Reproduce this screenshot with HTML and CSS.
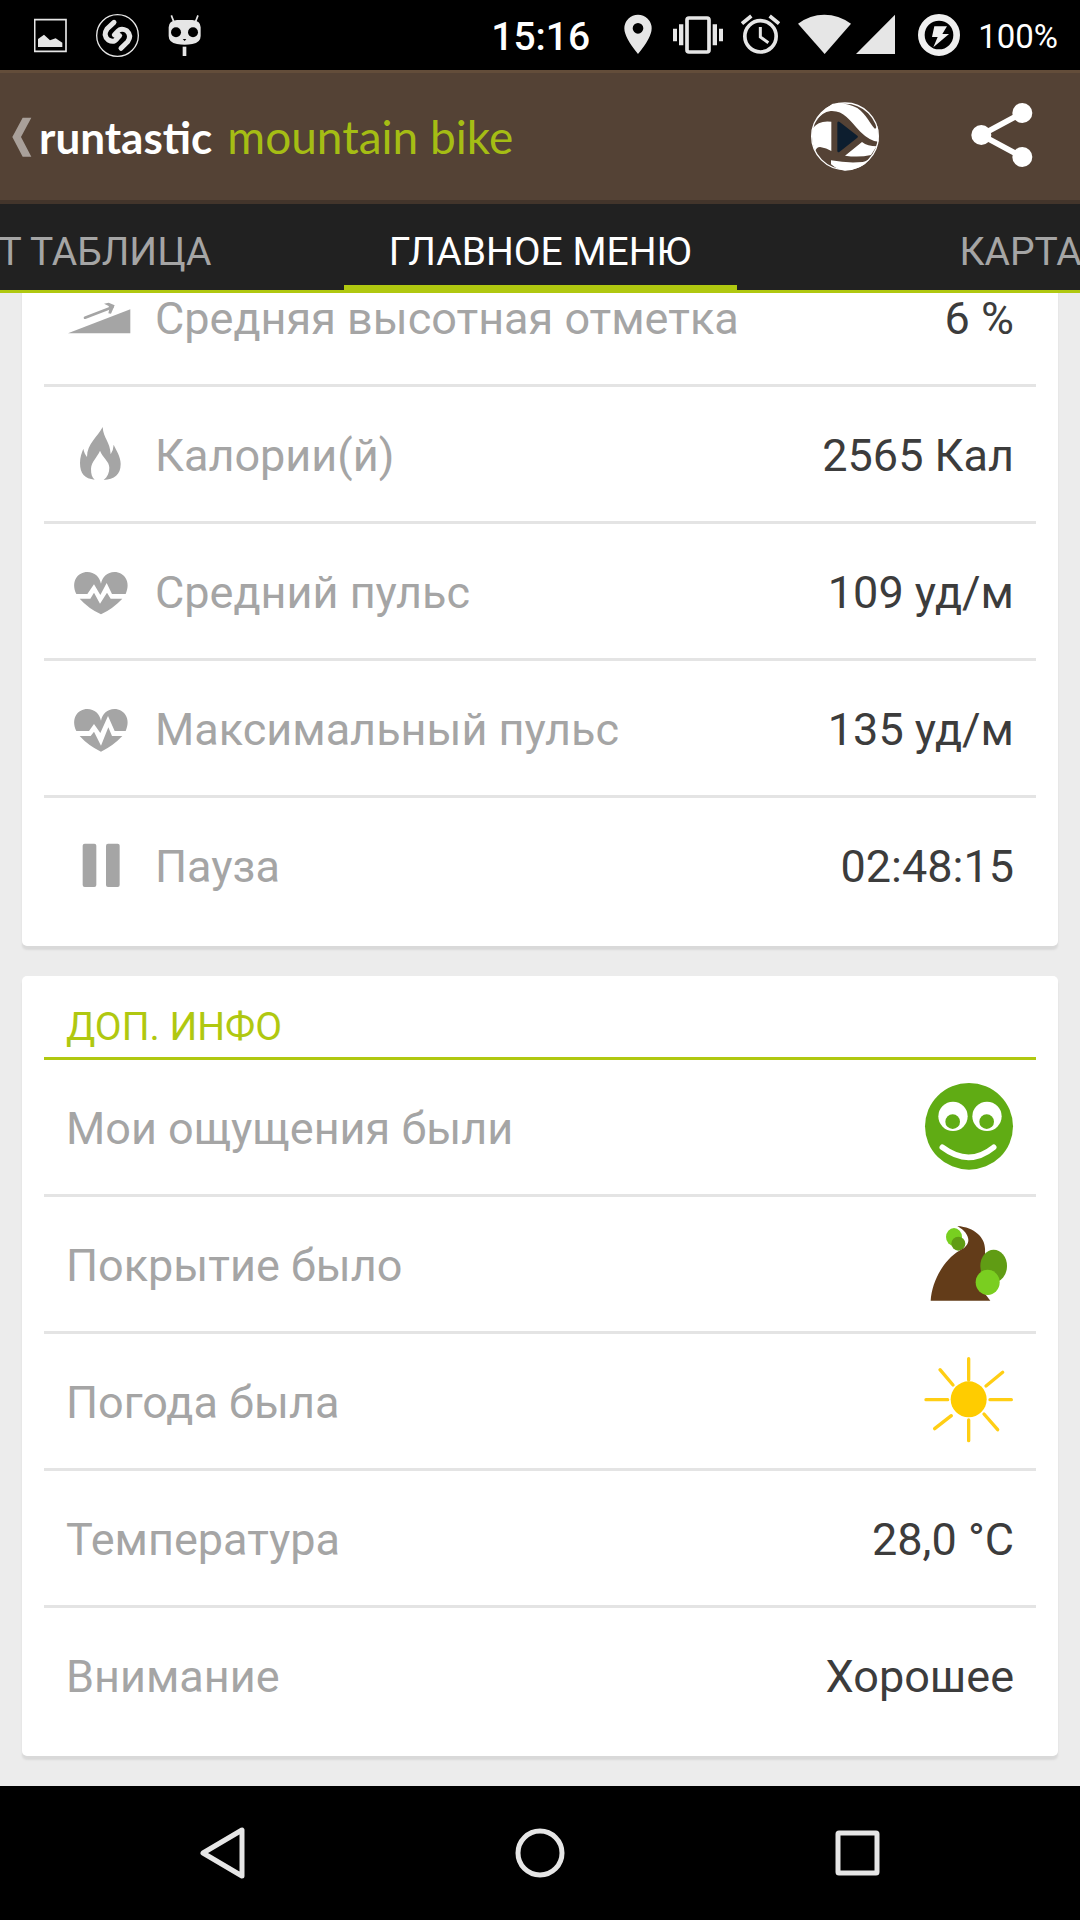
FILE: index.html
```html
<!DOCTYPE html>
<html lang="ru">
<head>
<meta charset="utf-8">
<meta name="viewport" content="width=device-width">
<title>Runtastic Mountain Bike</title>
<link rel="stylesheet" href="styles.css">
</head>
<body>
<div class="status">
  <div class="status-left">
    <svg width="33" height="70" viewBox="102 0 99 210"><path d="M104 59h94v95h-94z" fill="none" stroke="#e6e6e6" stroke-width="5"/><path d="M114 141v-24l18-13 18 17 17-6 20 13v13z" fill="#e6e6e6"/></svg>
    <svg width="43" height="70" viewBox="288 0 129 210"><circle cx="352.500" cy="106.500" r="62.500" fill="none" stroke="#e6e6e6" stroke-width="4"/><path d="M342 67l-21 20q-13 19 4 33 16 9 26-4l8-9M363 145l20-20q13-18-3-33-17-10-28 3l-9 10" fill="none" stroke="#e6e6e6" stroke-width="15" stroke-linecap="round"/></svg>
    <svg width="33" height="70" viewBox="505 0 99 210"><path d="M515 46l7 18M595 46l-7 18" stroke="#e6e6e6" stroke-width="5"/><path d="M532 60h46q25 2 25 22v26q0 20-25 24-23 4-46 0-25-4-25-24V82q0-20 25-22z" fill="#e6e6e6"/><circle cx="529" cy="97" r="15"/><circle cx="580" cy="97" r="15"/><path d="M549 117h11l-5 6z"/><path d="M549 140h11v28h-11z" fill="#e6e6e6"/></svg>
  </div>
  <div class="status-right">
    <time class="clock">15:16</time>
    <svg width="28" height="70" viewBox="70 0 84 210"><path fill-rule="evenodd" d="M112 44a41 41 0 0 1 41 41q0 28-41 77-41-49-41-77a41 41 0 0 1 41-41zm0 25a16 16 0 1 0 0 32 16 16 0 0 0 0-32z" fill="#e6e6e6"/></svg>
    <svg class="gap-vibrate" width="50" height="70" viewBox="219 0 150 210"><rect x="261" y="54" width="66" height="102" rx="6" fill="none" stroke="#e6e6e6" stroke-width="11"/><path d="M219 86h12v38h-12zM237 73h13v63h-13zM338 73h13v63h-13zM357 86h12v38h-12z" fill="#e6e6e6"/></svg>
    <svg class="gap-icon" width="39" height="70" viewBox="423 0 117 210"><g fill="none" stroke="#e6e6e6"><circle cx="481.500" cy="109" r="47" stroke-width="11"/><path d="M481 81v30l24 17" stroke-width="9"/><path d="M426 71l28-23M537 71l-28-23" stroke-width="11"/></g></svg>
    <svg class="gap-icon" width="53" height="70" viewBox="594 0 159 210"><path d="M594 71q36-27 79-27t80 27l-79 91z" fill="#e6e6e6"/></svg>
    <svg class="gap-signal" width="39" height="70" viewBox="768 0 117 210"><path d="M885 44v118H768z" fill="#e6e6e6"/></svg>
    <svg class="gap-battery" width="42" height="70" viewBox="954 0 126 210"><circle cx="1017" cy="105" r="53" fill="none" stroke="#efefef" stroke-width="20"/><path d="M1003 79h38l-14 23h20l-47 40 13-31h-17z" fill="#efefef"/></svg>
    <span class="battery">100%</span>
  </div>
</div>

<header class="appbar">
  <a class="home" href="#" aria-label="Назад">
    <svg width="20" height="60" viewBox="36 22 60 180"><path d="M68 54h26l-31 58 31 59H68L37 112z" fill="#a9a09a"/></svg>
    <span class="logo"><span class="brand">runtastic</span><span class="product">mountain bike</span></span>
  </a>
  <div class="actions">
    <button class="action" type="button" aria-label="Видео">
      <svg width="68" height="69" viewBox="633 309 204 207"><circle cx="735" cy="412" r="100" fill="none" stroke="#fff" stroke-width="4"/><g fill="#fff"><path d="M647 368q15-32 51-54 40-5 74 13c27 20 38 46 51 61q4 4 9-8l4 48q-27-2-55-30c-34-37-50-64-89-62q-27 3-45 32z"/><path d="M638 388q18-25 56-20v88q-14-9-34-12-10 0-15 13-14-36-7-69z"/><path d="M735 470l51-41q17 13 44 13l-17 26q-36 8-78 2z"/><path d="M693 484q48 9 95 5 18-4 24-11-28 36-77 37-22-2-42-19z"/></g><path d="M712 371q1-6 7-2l53 41q4 3 0 6l-53 42q-6 4-7-2z" fill="#0d1e2f"/></svg>
    </button>
    <button class="action" type="button" aria-label="Поделиться">
      <svg width="62" height="69" viewBox="1112 309 186 207"><path d="M1266 342l-123 66 123 66" fill="none" stroke="#fff" stroke-width="17"/><g fill="#fff"><circle cx="1266" cy="342" r="30"/><circle cx="1143" cy="408" r="30"/><circle cx="1266" cy="474" r="30"/></g></svg>
    </button>
  </div>
</header>

<nav class="tabs">
  <a class="tab tab-prev" href="#">Т ТАБЛИЦА</a>
  <a class="tab tab-active" href="#" aria-current="page">ГЛАВНОЕ МЕНЮ</a>
  <a class="tab tab-next" href="#">КАРТА</a>
</nav>

<main class="content">
  <section class="card card-scrolled">
    <dl class="rows">
      <div class="row">
        <svg width="70" height="70" viewBox="48 -24 210 210"><path d="M54 130l187-72v72z" fill="#a5a5a5"/><path d="M105 83l82-31" stroke="#a5a5a5" stroke-width="8" stroke-linecap="round"/><path d="M162 41l14-3 18 8-11 25-8-1 3-12-2-10z" fill="#a5a5a5"/></svg>
        <dt>Средняя высотная отметка</dt><dd>6 %</dd>
      </div>
      <div class="row">
        <svg width="70" height="70" viewBox="48 387 210 210"><path d="M158 411c2 35 22 42 24 82q8-11 9-29c8 18 21 35 21 58 0 32-19 46-51 48 12-10 17-23 17-37 0-20-20-29-28-51-7 18-26 33-27 54 0 16 3 26 11 33-30-3-44-18-44-50 0-17 5-31 10-43 2 12 6 17 11 25 0-40 32-60 47-90z" fill="#a5a5a5"/></svg>
        <dt>Калории(й)</dt><dd>2565 Кал</dd>
      </div>
      <div class="row">
        <svg width="70" height="70" viewBox="48 798 210 210"><g fill="#a5a5a5"><path d="M79 912c-18-38 5-66 33-66 22 0 37 15 41 35 4-20 19-35 40-35 30 0 51 30 34 66h-41l-16-33-19 36-19-32-20 29z"/><path d="M89 926h32l11-18 18 33 21-33 11 18h35q-27 29-64 47-38-18-64-47z"/></g></svg>
        <dt>Средний пульс</dt><dd>109 уд/м</dd>
      </div>
      <div class="row">
        <svg width="70" height="70" viewBox="48 1209 210 210"><g fill="#a5a5a5"><path d="M79 1323c-18-38 5-66 33-66 22 0 37 15 41 35 4-20 19-35 40-35 30 0 51 30 34 66h-33l-20-45-23 51-19-27-15 21z"/><path d="M89 1338h33l10-13 21 42 22-55 11 26h31q-27 29-64 47-38-18-64-47z"/></g></svg>
        <dt>Максимальный пульс</dt><dd>135 уд/м</dd>
      </div>
      <div class="row">
        <svg width="70" height="70" viewBox="198 570 210 210"><g fill="#a5a5a5"><rect x="248" y="611" width="41" height="130" rx="6"/><rect x="318" y="611" width="41" height="130" rx="6"/></g></svg>
        <dt>Пауза</dt><dd>02:48:15</dd>
      </div>
    </dl>
  </section>

  <section class="card">
    <h2 class="card-title">ДОП. ИНФО</h2>
    <dl class="rows">
      <div class="row">
        <dt>Мои ощущения были</dt>
        <dd class="picture"><svg role="img" aria-label="Отлично" width="90" height="90" viewBox="132 66 270 270"><ellipse cx="267" cy="199" rx="132" ry="130" fill="#60ac14"/><g fill="#fff"><circle cx="219" cy="169" r="44"/><circle cx="321" cy="169" r="44"/></g><g fill="#60ac14"><circle cx="218" cy="185" r="22"/><circle cx="320" cy="185" r="22"/></g><path d="M187 262q80 60 154 0" fill="none" stroke="#fff" stroke-width="17" stroke-linecap="round"/></svg></dd>
      </div>
      <div class="row">
        <dt>Покрытие было</dt>
        <dd class="picture"><svg role="img" aria-label="Тропа" width="90" height="90" viewBox="132 477 270 270"><ellipse cx="222" cy="531" rx="24" ry="27" fill="#78cf20"/><circle cx="235" cy="551" r="21" fill="#609c14"/><path d="M232 498c54 4 86 37 83 75v128l16 21H152c4-60 40-123 86-150 39-17 35-50-6-74z" fill="#633c19"/><ellipse cx="341" cy="618" rx="40" ry="49" fill="#609c14"/><ellipse cx="323" cy="667" rx="36" ry="38" fill="#7ace20"/></svg></dd>
      </div>
      <div class="row">
        <dt>Погода была</dt>
        <dd class="picture"><svg role="img" aria-label="Солнечно" width="90" height="90" viewBox="132 888 270 270"><circle cx="266" cy="1018" r="54" fill="#fc0"/><path d="M266 896v64M266 1080v62M138 1019h65M330 1019h64M180 929l39 46M318 978l50-41M214 1067l-50 39M312 1062l41 47" stroke="#ffce14" stroke-width="10" stroke-linecap="round"/></svg></dd>
      </div>
      <div class="row"><dt>Температура</dt><dd>28,0 °C</dd></div>
      <div class="row"><dt>Внимание</dt><dd>Хорошее</dd></div>
    </dl>
  </section>
</main>

<footer class="navbar">
  <button class="navkey" type="button" aria-label="Назад"><svg width="52" height="56" viewBox="0 0 52 56"><path d="M46 5v46L7 28z" fill="none" stroke="#e6e6e6" stroke-width="5" stroke-linejoin="round"/></svg></button>
  <button class="navkey" type="button" aria-label="Домой"><svg width="52" height="56" viewBox="0 0 52 56"><circle cx="26" cy="28" r="22" fill="none" stroke="#e6e6e6" stroke-width="5"/></svg></button>
  <button class="navkey" type="button" aria-label="Недавние"><svg width="52" height="56" viewBox="0 0 52 56"><rect x="6" y="8" width="39" height="40" rx="1" fill="none" stroke="#e6e6e6" stroke-width="5"/></svg></button>
</footer>
</body>
</html>
```
FILE: styles.css
```css
* {
  box-sizing: border-box;
}

body {
  display: flex;
  flex-direction: column;
  min-height: 100vh;
  margin: 0;
  background: #ececec;
  color: #3c3c3c;
  font-family: Roboto, "Noto Sans", sans-serif;
}

svg {
  display: block;
  flex: none;
}

button {
  padding: 0;
  border: 0;
  background: none;
}

a {
  color: inherit;
  text-decoration: none;
}

/* System status bar */
.status {
  display: flex;
  justify-content: space-between;
  height: 70px;
  padding: 0 22px 0 34px;
  background: #000;
  color: #fff;
}

.status-left,
.status-right {
  display: flex;
  align-items: center;
}

.status-left {
  gap: 29px;
}

.clock {
  margin-right: 34px;
  padding-top: 3px;
  font-size: 39px;
  font-weight: 500;
}

.battery {
  margin-left: 18px;
  padding-top: 3px;
  font-size: 33px;
}

.gap-vibrate {
  margin-left: 21px;
}

.gap-icon {
  margin-left: 18px;
}

.gap-signal {
  margin-left: 5px;
}

.gap-battery {
  margin-left: 23px;
}

/* Application bar */
.appbar {
  display: flex;
  align-items: center;
  justify-content: space-between;
  height: 134px;
  padding: 0 47px 0 12px;
  border-top: 3px solid #634d3a;
  border-bottom: 4px solid #43352b;
  background: #544235;
}

.home {
  display: flex;
  align-items: center;
  gap: 7px;
}

.logo {
  display: flex;
  align-items: baseline;
  gap: 15px;
  font-family: Lato, sans-serif;
  line-height: 60px;
}

.brand {
  color: #fff;
  font-size: 44px;
  font-weight: 700;
}

.product {
  color: #a5bd14;
  font-size: 46px;
}

.actions {
  display: flex;
  gap: 92px;
}

/* Tabs */
.tabs {
  display: grid;
  grid-template-columns: 1fr 393px 1fr;
  height: 89px;
  background: #212121;
  color: #a5a5a5;
  font-size: 39px;
  line-height: 46px;
  white-space: nowrap;
}

.tab {
  display: flex;
  overflow: hidden;
  padding-top: 25px;
  border-bottom: 3px solid #b0c810;
}

.tab-prev {
  justify-content: flex-end;
  padding-right: 132px;
}

.tab-active {
  justify-content: center;
  border-bottom-width: 8px;
  color: #fff;
}

.tab-next {
  padding-left: 223px;
}

/* Cards */
.content {
  display: flex;
  flex: 1;
  flex-direction: column;
  gap: 30px;
  overflow: hidden;
  padding: 0 22px 30px;
}

.card {
  padding: 0 22px 14px;
  border-radius: 5px;
  background: #fff;
  box-shadow: 0 4px 2px #d9d9d9;
}

.card-scrolled {
  margin-top: -43px;
}

.card-title {
  margin: 0;
  padding: 28px 22px 7px;
  border-bottom: 3px solid #b0c810;
  color: #b0c810;
  font-size: 39px;
  font-weight: 400;
  line-height: 46px;
}

.rows {
  margin: 0;
}

.row {
  display: flex;
  align-items: center;
  gap: 19px;
  min-height: 134px;
  padding: 0 22px;
  font-size: 45px;
  line-height: 54px;
}

.row + .row {
  min-height: 137px;
  border-top: 3px solid #e4e4e4;
}

.row dt {
  padding-top: 3px;
  color: #a5a5a5;
}

.row dd {
  margin: 0 0 0 auto;
  padding-top: 3px;
}

.row .picture {
  padding: 0;
}

/* System navigation */
.navbar {
  display: flex;
  height: 134px;
  padding: 0 63px;
  background: #000;
}

.navkey {
  display: flex;
  flex: 1;
  align-items: center;
  justify-content: center;
}
```
